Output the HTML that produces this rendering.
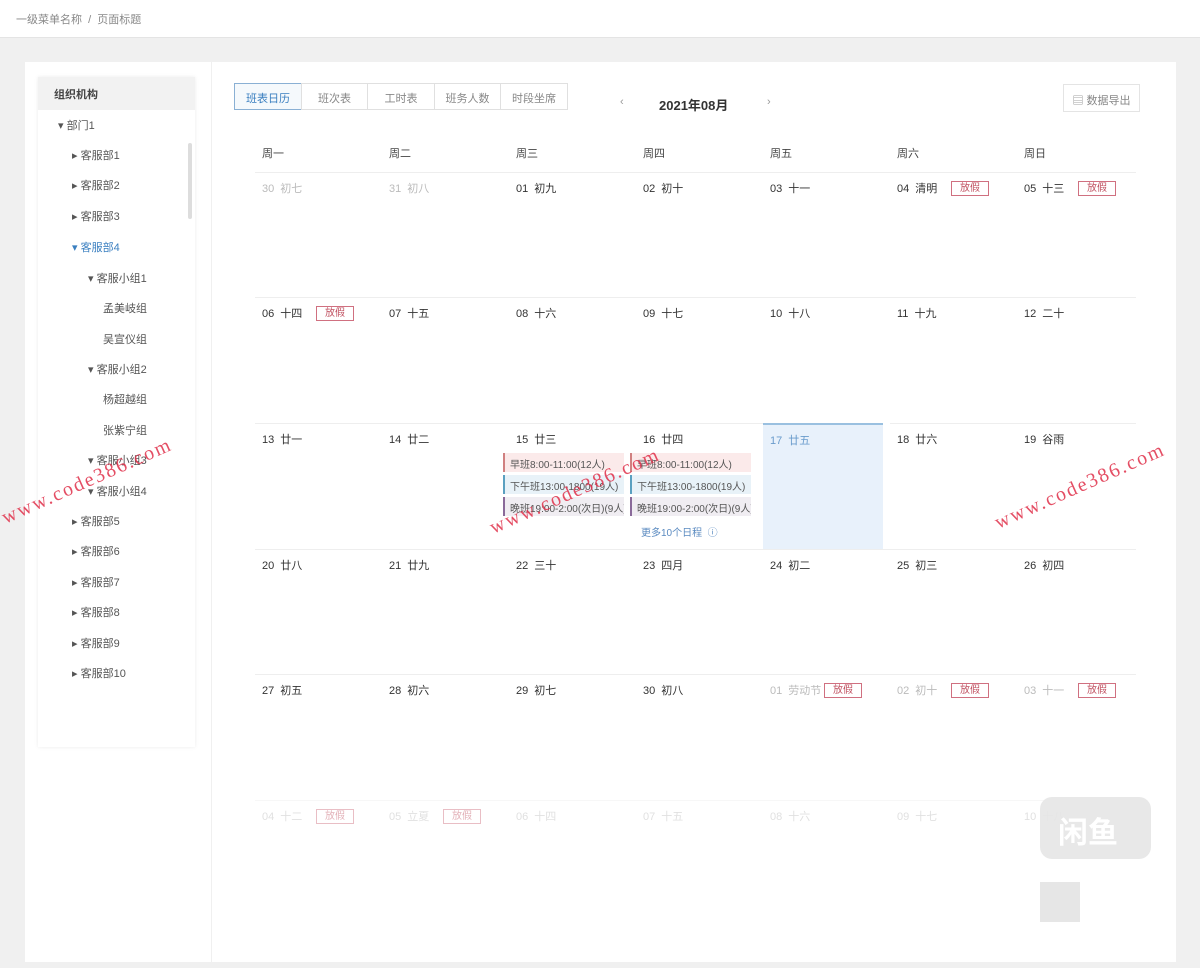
<!DOCTYPE html>
<html><head><meta charset="utf-8"><style>
*{box-sizing:border-box;margin:0;padding:0}
body{width:1200px;height:968px;background:#f0f0f0;font-family:"Liberation Sans","Noto Sans CJK SC",sans-serif;font-size:11px;color:#333;position:relative;overflow:hidden}
.hdr{position:absolute;left:0;top:0;width:1200px;height:38px;background:#fff;border-bottom:1px solid #e4e4e4;padding:11px 16px;color:#888;font-size:11px}
.left{position:absolute;left:25px;top:62px;width:186px;height:900px;background:#fff}
.tree{position:absolute;left:13px;top:15px;width:157px;height:670px;background:#fff;box-shadow:0 0 4px rgba(0,0,0,.08)}
.tree .t{height:33px;background:#f2f2f2;font-weight:bold;padding:9px 16px;font-size:11px;color:#444}
.node{position:absolute;font-size:11px;color:#555;white-space:nowrap}
.main{position:absolute;left:212px;top:62px;width:964px;height:900px;background:#fff}
.tabs{position:absolute;left:23px;top:21px;display:flex}
.tabs div{height:27px;border:1px solid #e0e0e0;margin-left:-1px;padding:6px 0;text-align:center;color:#888;font-size:11px}
.tabs div.on{color:#3a7fc0;border-color:#8ab0d4;background:#f5f9fc}
.cell{position:absolute;width:127px;height:126px;border-top:1px solid #eee;padding:7px 7px;font-size:11px;color:#333;word-spacing:3px}
.g{color:#bbb}
.tag{position:absolute;top:8px;font-size:10px;color:#c05060;border:1px solid #d07080;width:38px;text-align:center;line-height:13px;word-spacing:0}
.wh{position:absolute;font-size:11px;color:#444}
.ev{height:19px;margin:3px 0 0 -13px;font-size:10px;padding:3px 5px;border-left:2px solid;width:121px;white-space:nowrap;color:#555;word-spacing:0;overflow:hidden}
.wm{position:absolute;color:#e0304a;font-family:"Liberation Serif",serif;font-size:20px;transform:rotate(-24deg);letter-spacing:2px;opacity:.85}
</style></head><body>
<div class="hdr">一级菜单名称 &nbsp;/&nbsp; 页面标题</div>
<div class="left"><div class="tree"><div class="t">组织机构</div>
<div style="position:absolute;right:3px;top:66px;width:4px;height:76px;background:#ddd;border-radius:2px"></div>
</div></div>
<div class="node" style="left:58px;top:117px">▾ 部门1</div>
<div class="node" style="left:72px;top:147px">▸ 客服部1</div>
<div class="node" style="left:72px;top:177px">▸ 客服部2</div>
<div class="node" style="left:72px;top:208px">▸ 客服部3</div>
<div class="node" style="left:72px;top:239px;color:#3a7fc0">▾ 客服部4</div>
<div class="node" style="left:88px;top:270px">▾ 客服小组1</div>
<div class="node" style="left:103px;top:300px">孟美岐组</div>
<div class="node" style="left:103px;top:331px">吴宣仪组</div>
<div class="node" style="left:88px;top:361px">▾ 客服小组2</div>
<div class="node" style="left:103px;top:391px">杨超越组</div>
<div class="node" style="left:103px;top:422px">张紫宁组</div>
<div class="node" style="left:88px;top:452px">▾ 客服小组3</div>
<div class="node" style="left:88px;top:483px">▾ 客服小组4</div>
<div class="node" style="left:72px;top:513px">▸ 客服部5</div>
<div class="node" style="left:72px;top:543px">▸ 客服部6</div>
<div class="node" style="left:72px;top:574px">▸ 客服部7</div>
<div class="node" style="left:72px;top:604px">▸ 客服部8</div>
<div class="node" style="left:72px;top:635px">▸ 客服部9</div>
<div class="node" style="left:72px;top:665px">▸ 客服部10</div>
<div class="main">
<div class="tabs"><div class="on" style="width:68px">班表日历</div><div style="width:67px">班次表</div><div style="width:68px">工时表</div><div style="width:67px">班务人数</div><div style="width:68px">时段坐席</div></div>
<div style="position:absolute;left:408px;top:34px;color:#999">‹</div>
<div style="position:absolute;left:447px;top:33px;font-size:13px;font-weight:bold;color:#333">2021年08月</div>
<div style="position:absolute;left:555px;top:34px;color:#999">›</div>
<div style="position:absolute;left:851px;top:22px;width:77px;height:28px;border:1px solid #e4e4e4;padding:7px 0;text-align:center;white-space:nowrap;color:#888;font-size:11px">▤ 数据导出</div>
</div>
<div id="cal"></div>
<script>
var xs=[255,382,509,636,763,890,1017],ys=[172,297,423,549,674,800];
var wd=["周一","周二","周三","周四","周五","周六","周日"],h="";
wd.forEach(function(w,i){h+='<div class="wh" style="left:'+(xs[i]+7)+'px;top:145px">'+w+'</div>'});
var d=[["30 初七",1],["31 初八",1],["01 初九"],["02 初十"],["03 十一"],["04 清明",0,1],["05 十三",0,1],
["06 十四",0,1],["07 十五"],["08 十六"],["09 十七"],["10 十八"],["11 十九"],["12 二十"],
["13 廿一"],["14 廿二"],["15 廿三"],["16 廿四"],["17 廿五"],["18 廿六"],["19 谷雨"],
["20 廿八"],["21 廿九"],["22 三十"],["23 四月"],["24 初二"],["25 初三"],["26 初四"],
["27 初五"],["28 初六"],["29 初七"],["30 初八"],["01 劳动节",1,1],["02 初十",1,1],["03 十一",1,1],
["04 十二",1,1],["05 立夏",1,1],["06 十四",1],["07 十五",1],["08 十六",1],["09 十七",1],["10 十八",1]];
d.forEach(function(c,k){var r=Math.floor(k/7),i=k%7,x=xs[i],y=ys[r];
var st='left:'+x+'px;top:'+y+'px;';if(i==6)st+='width:119px;';if(k==18)st+='width:120px;background:#e8f1fb;border-top:2px solid #9ac0e0;';
if(r==5)st+='opacity:.45;';
h+='<div class="cell" style="'+st+'"><span class="'+(c[1]?'g':'')+'" style="'+(k==18?'color:#6a9ccc':'')+'">'+c[0]+'</span>';
if(c[2])h+='<span class="tag" style="left:61px">放假</span>';
if(k==16||k==17){h+='<div style="margin-top:6px"><div class="ev" style="background:#fbeaea;border-color:#d08080">早班8:00-11:00(12人)</div><div class="ev" style="background:#e8f2f8;border-color:#5aa0c0">下午班13:00-1800(19人)</div><div class="ev" style="background:#f0edf2;border-color:#8a6a9a">晚班19:00-2:00(次日)(9人)</div>';
if(k==17)h+='<div style="margin:8px 0 0 -2px;color:#5a8ac0;font-size:10px;word-spacing:0">更多10个日程 &nbsp;ⓘ</div>';h+='</div>'}
h+='</div>'});
document.getElementById('cal').innerHTML=h;
</script>
<div class="wm" style="left:-5px;top:470px">www.code386.com</div>
<div class="wm" style="left:483px;top:480px">www.code386.com</div>
<div class="wm" style="left:988px;top:475px">www.code386.com</div>
<div style="position:absolute;left:1040px;top:797px;width:111px;height:62px;background:rgba(230,230,230,.9);border-radius:12px;color:#fff;font-size:30px;font-weight:bold;padding:11px 18px">闲鱼</div>
<div style="position:absolute;left:1040px;top:882px;width:40px;height:40px;background:#e6e6e6"></div>
</body></html>
